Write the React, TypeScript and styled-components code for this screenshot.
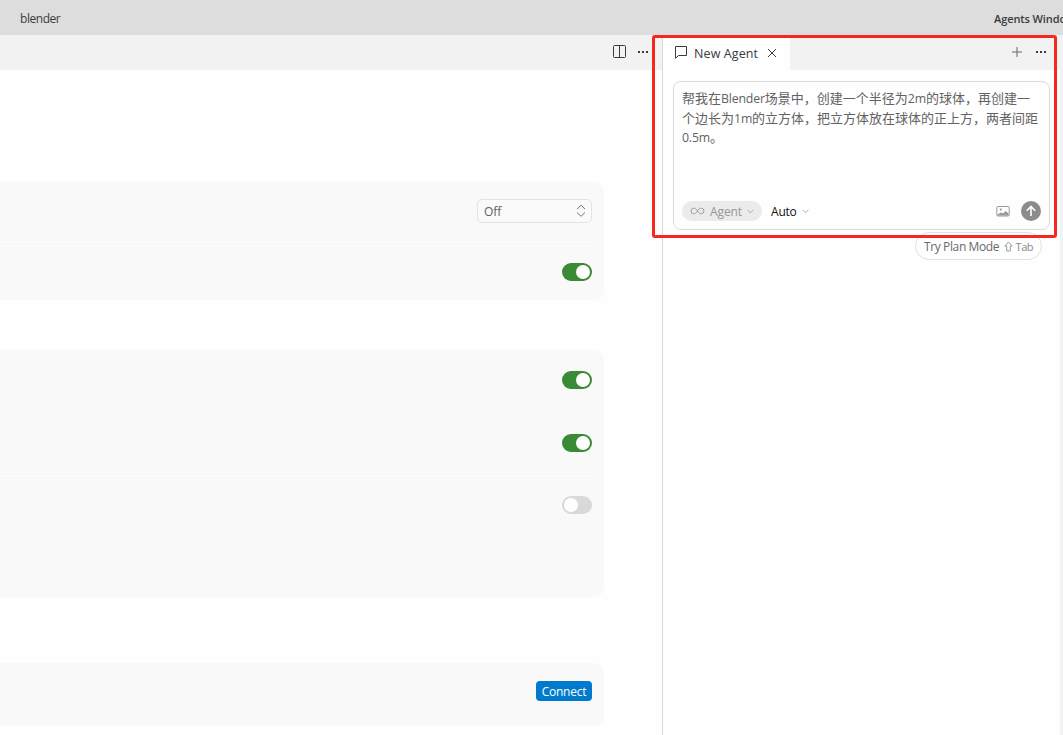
import React from "react";
import styled, { createGlobalStyle } from "styled-components";

const Global = createGlobalStyle`
  * { box-sizing: border-box; }
  body { margin: 0; background: #fff; overflow: hidden; }
`;

const Window = styled.div`
  position: relative;
  display: flex;
  flex-direction: column;
  width: 1063px;
  height: 735px;
  overflow: hidden;
  background: #fefefe;
  color: #3b3b3b;
  font-family: "Open Sans", "Noto Sans CJK SC", sans-serif;
  font-size: 12px;
  svg { flex: none; }
`;

const Text = styled.span<{ $size?: number; $color?: string; $spacing?: number; $weight?: number }>`
  font-size: ${(p) => p.$size ?? 12}px;
  color: ${(p) => p.$color ?? "inherit"};
  letter-spacing: ${(p) => p.$spacing ?? 0}px;
  font-weight: ${(p) => p.$weight ?? 400};
  white-space: nowrap;
`;

const TitleBar = styled.header`
  display: flex;
  flex: none;
  justify-content: space-between;
  height: 35px;
  padding: 0 0 0 20px;
  line-height: 37px;
  background: #dddddd;
`;

const AgentsLabel = styled.div`
  width: 69px;
  overflow: hidden;
`;

const Body = styled.div`
  display: flex;
  flex: 1;
`;

const Editor = styled.main`
  display: flex;
  flex-direction: column;
  width: 662px;
`;

const EditorBar = styled.div`
  display: flex;
  align-items: center;
  justify-content: flex-end;
  gap: 10px;
  height: 35px;
  padding: 0 13px 2px 0;
  background: #f2f2f2;
`;

const Settings = styled.div`
  display: flex;
  flex-direction: column;
  width: 604px;
  padding-top: 112px;
`;

const Card = styled.section<{ $gap: number }>`
  margin-bottom: ${(p) => p.$gap}px;
  padding-right: 12px;
  background: #f9f9f9;
  border-radius: 0 10px 10px 0;
`;

const Row = styled.div<{ $height: number; $lead: number }>`
  display: flex;
  align-items: flex-start;
  justify-content: flex-end;
  height: ${(p) => p.$height}px;
  padding-top: ${(p) => p.$lead}px;
  & + & {
    border-top: 1px solid #f6f6f6;
    box-shadow: inset 0 1px 0 #fdfdfd;
  }
`;

const Select = styled.div`
  display: flex;
  align-items: center;
  justify-content: space-between;
  width: 115px;
  height: 24px;
  padding: 1px 5px 0 6px;
  border: 1px solid #e3e3e3;
  border-radius: 5px;
  background: #fafafa;
  svg { margin-bottom: 1px; }
`;

const Switch = styled.div<{ $on?: boolean }>`
  display: flex;
  justify-content: ${(p) => (p.$on ? "flex-end" : "flex-start")};
  width: 30px;
  height: 18px;
  padding: 2px;
  border-radius: 9px;
  background: ${(p) => (p.$on ? "#388a34" : "#d9d9d9")};
  &::after {
    content: "";
    width: 14px;
    height: 14px;
    border-radius: 50%;
    background: #fff;
  }
`;

const Button = styled.button`
  width: 56px;
  height: 20px;
  padding: 0;
  border: 0;
  border-radius: 4px;
  background: #007acc;
  color: #fff;
  font-family: inherit;
  line-height: 21px;
`;

const AgentPane = styled.aside`
  display: flex;
  flex-direction: column;
  width: 398px;
  border-left: 1px solid #d9d9d9;
`;

const TabBar = styled.div`
  display: flex;
  justify-content: space-between;
  height: 35px;
  background: #f2f2f2;
`;

const Tab = styled.div`
  display: flex;
  align-items: center;
  width: 127px;
  padding-left: 11px;
  background: #fefefe;
  svg:last-child { margin-left: auto; margin-right: 13px; }
`;

const TabLabel = styled(Text)`
  margin-left: 6px;
  padding-top: 2px;
`;

const TabActions = styled.div`
  display: flex;
  align-items: center;
  gap: 12px;
  padding: 0 13px 1px 0;
`;

const Composer = styled.div`
  display: flex;
  flex-direction: column;
  justify-content: space-between;
  width: 377px;
  height: 149px;
  margin: 11px 0 0 10px;
  padding: 7px 8px 8px;
  border: 1px solid #dcdcdc;
  border-radius: 8px;
`;

const Prompt = styled.div`
  color: #626262;
  font-size: 13px;
  line-height: 19.5px;
  white-space: nowrap;
`;

const Tools = styled.div`
  display: flex;
  align-items: center;
  height: 20px;
`;

const Mode = styled.div`
  display: flex;
  align-items: center;
  width: 80px;
  height: 20px;
  padding: 0 6px 0 8px;
  gap: 5px;
  border-radius: 10px;
  background: #ebebeb;
`;

const Model = styled.div`
  display: flex;
  align-items: center;
  gap: 5px;
  margin: 1px auto 0 9px;
`;

const Send = styled.div`
  display: flex;
  align-items: center;
  justify-content: center;
  width: 20px;
  height: 20px;
  margin-left: 11px;
  border-radius: 50%;
  background: #8c8c8c;
`;

const Hint = styled.div`
  display: flex;
  align-items: center;
  align-self: flex-end;
  width: 127px;
  height: 28px;
  margin: 2px 18px 0 0;
  padding: 1px 8px 0 8px;
  border: 1px solid #e1e1e1;
  border-radius: 14px;
  svg { margin: 0 3px 0 auto; }
`;

const Edge = styled.div`
  width: 3px;
  background: #f2f2f2;
`;

const Highlight = styled.div`
  position: absolute;
  left: 652px;
  top: 35px;
  width: 405px;
  height: 203px;
  border: 3px solid #f7261e;
  border-radius: 3px;
`;

const Dots = () => (
  <svg width="12" height="4" viewBox="0 0 12 4" fill="#3b3b3b">
    <rect x="1" y="1" width="2" height="2" />
    <rect x="5" y="1" width="2" height="2" />
    <rect x="9" y="1" width="2" height="2" />
  </svg>
);

const Chevron = () => (
  <svg width="7" height="5" viewBox="0 0 7 5" fill="none" stroke="#ababab">
    <path d="M.5.8 3.5 3.8 6.5.8" />
  </svg>
);

const Latin = ({ children }: { children: string }) => (
  <Text $size={12.3} $spacing={-0.17}>{children}</Text>
);

export default function App() {
  return (
    <Window>
      <Global />
      <TitleBar>
        <Text $size={12} $spacing={-0.45}>blender</Text>
        <AgentsLabel>
          <Text $size={11} $weight={600} $spacing={-0.1}>Agents Window</Text>
        </AgentsLabel>
      </TitleBar>
      <Body>
        <Editor>
          <EditorBar>
            <svg width="14" height="14" viewBox="0 0 14 14" fill="none" stroke="#3b3b3b">
              <rect x=".5" y=".5" width="12" height="12" rx="1" />
              <path d="M6.500.5v12" />
            </svg>
            <Dots />
          </EditorBar>
          <Settings>
            <Card $gap={50}>
              <Row $height={58} $lead={17}>
                <Select>
                  <Text $color="#606060" $spacing={-0.1}>Off</Text>
                  <svg width="10" height="14" viewBox="0 0 10 14" fill="none" stroke="#777">
                    <path d="M1 5 5 1.2 9 5M1 8.5 5 12.3 9 8.5" />
                  </svg>
                </Select>
              </Row>
              <Row $height={60} $lead={22}><Switch $on /></Row>
            </Card>
            <Card $gap={66}>
              <Row $height={63} $lead={21}><Switch $on /></Row>
              <Row $height={61} $lead={20}><Switch $on /></Row>
              <Row $height={63} $lead={21}><Switch /></Row>
              <Row $height={60} $lead={0} />
            </Card>
            <Card $gap={0}>
              <Row $height={63} $lead={18}>
                <Button><Text $spacing={-0.25}>Connect</Text></Button>
              </Row>
            </Card>
          </Settings>
        </Editor>
        <AgentPane>
          <TabBar>
            <Tab>
              <svg width="14" height="14" viewBox="0 0 14 14" fill="none" stroke="#3b3b3b">
                <path d="M1.500.5h11v9h-8L1.500 12.300z" strokeLinejoin="round" />
              </svg>
              <TabLabel $size={12.5} $spacing={0.1}>New Agent</TabLabel>
              <svg width="10" height="10" viewBox="0 0 10 10" stroke="#3b3b3b">
                <path d="m1 1 8 8M9 1 1 9" />
              </svg>
            </Tab>
            <TabActions>
              <svg width="12" height="12" viewBox="0 0 12 12" stroke="#666">
                <path d="M6 1v10M1 6h10" />
              </svg>
              <Dots />
            </TabActions>
          </TabBar>
          <Composer>
            <Prompt>
              帮我在<Latin>Blender</Latin>场景中，创建一个半径为<Latin>2m</Latin>的球体，再创建一<br />
              个边长为<Latin>1m</Latin>的立方体，把立方体放在球体的正上方，两者间距<br />
              <Latin>0.5m</Latin>。
            </Prompt>
            <Tools>
              <Mode>
                <svg width="15" height="8" viewBox="0 0 15 8" fill="none" stroke="#a0a0a0">
                  <path d="M7.5 4C6.2 2 5.300 1.200 3.800 1.200a2.800 2.800 0 0 0 0 5.600C5.300 6.800 6.200 6 7.500 4S9.700 1.200 11.200 1.200a2.800 2.800 0 0 1 0 5.600C9.700 6.800 8.800 6 7.500 4z" />
                </svg>
                <Text $color="#969696" $spacing={-0.1}>Agent</Text>
                <Chevron />
              </Mode>
              <Model>
                <Text $color="#111" $spacing={-0.2}>Auto</Text>
                <Chevron />
              </Model>
              <svg width="14" height="12" viewBox="0 0 14 12" fill="none" stroke="#999">
                <rect x=".8" y="1.500" width="12.400" height="9.500" rx="1.200" />
                <path d="M1.500 9.500 5 7.500l2 1L9.500 6l3 2.500V10.500H1.500z" fill="#999" stroke="none" />
                <circle cx="4.800" cy="4.600" r="1.100" fill="#999" stroke="none" />
              </svg>
              <Send>
                <svg width="12" height="12" viewBox="0 0 12 12" fill="none" stroke="#fff" strokeWidth="1.600">
                  <path d="M6 11V1.500M1.800 5.700 6 1.500l4.200 4.200" />
                </svg>
              </Send>
            </Tools>
          </Composer>
          <Hint>
            <Text $color="#6a6a6a" $spacing={-0.38}>Try Plan Mode</Text>
            <svg width="9" height="11" viewBox="0 0 9 11" fill="none" stroke="#999">
              <path d="M4.500 1 8.200 5H6.300v5H2.700V5H.8z" />
            </svg>
            <Text $size={11} $color="#888" $spacing={-0.5}>Tab</Text>
          </Hint>
        </AgentPane>
        <Edge />
      </Body>
      <Highlight />
    </Window>
  );
}
